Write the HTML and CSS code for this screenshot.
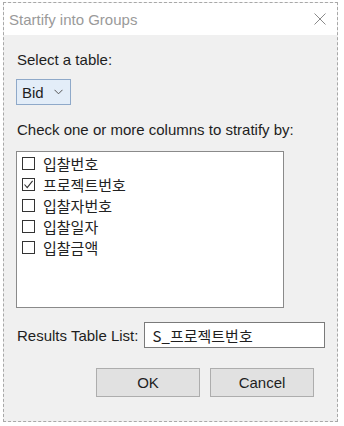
FILE: index.html
```html
<!DOCTYPE html>
<html lang="ko">
<head>
    <meta charset="UTF-8">
    <meta name="viewport" content="width=device-width, initial-scale=1.0">
    <title>Startify into Groups</title>
    <link rel="stylesheet" href="styles.css">
</head>
<body>
    <div class="window">
        <div class="titlebar">
            <span class="title">Startify into Groups</span>
            <svg class="close" width="12" height="12" viewBox="0 0 12 12">
                <path d="M0.5 0.5 L11.5 11.5 M11.5 0.5 L0.5 11.5" stroke="#8a8a8a" stroke-width="1" fill="none"/>
            </svg>
        </div>
        <div class="content">
            <div class="label">Select a table:</div>
            <div class="combo">
                <span>Bid</span>
                <svg width="9" height="6" viewBox="0 0 9 6">
                    <path d="M0.5 0.8 L4.5 4.8 L8.5 0.8" stroke="#555" stroke-width="1" fill="none"/>
                </svg>
            </div>

            <div class="label label-check">Check one or more columns to stratify by:</div>
            <div class="listbox">
                <div class="item"><span class="box"></span>입찰번호</div>
                <div class="item"><span class="box checked">
                    <svg width="11" height="11" viewBox="0 0 11 11">
                        <path d="M1.5 5.5 L4.2 8.6 L9.6 1.8" stroke="#333" stroke-width="1.1" fill="none"/>
                    </svg>
                </span>프로젝트번호</div>
                <div class="item"><span class="box"></span>입찰자번호</div>
                <div class="item"><span class="box"></span>입찰일자</div>
                <div class="item"><span class="box"></span>입찰금액</div>
            </div>

            <div class="results">
                <span class="results-label">Results Table List:</span>
                <div class="textbox">S_프로젝트번호</div>
            </div>

            <div class="buttons">
                <button type="button">OK</button>
                <button type="button">Cancel</button>
            </div>
        </div>
    </div>
</body>
</html>
```

FILE: styles.css
```css
body {
    margin: 0;
    background-color: #ffffff;
    font-family: "Segoe UI", "Liberation Sans", "Noto Sans CJK KR", sans-serif;
    font-size: 15px;
    color: #1e1e1e;
}

.window {
    margin: 2px 0 0 3px;
    width: 333px;
    height: 418px;
    border: 1px dashed #a8a8a8;
    background-color: #f0f0f0;
    display: flex;
    flex-direction: column;
}

.titlebar {
    height: 32px;
    background-color: #ffffff;
    display: flex;
    align-items: center;
    justify-content: space-between;
    padding: 0 11px 0 5px;
}

.title {
    color: #9a9a9a;
}

.content {
    padding: 15px 12px 0 12px;
}

.label {
    line-height: 20px;
    padding-left: 1px;
}

.combo {
    margin-top: 9px;
    width: 55px;
    height: 26px;
    border: 1px solid #8fa9c9;
    background-color: #e3edf8;
    display: flex;
    align-items: center;
    justify-content: space-between;
    padding: 0 7px 0 5px;
    box-sizing: border-box;
}

.label-check {
    margin-top: 15px;
}

.listbox {
    margin-top: 11px;
    width: 268px;
    height: 157px;
    border: 1px solid #8a8a8a;
    background-color: #ffffff;
    box-sizing: border-box;
    padding-top: 1px;
}

.item {
    height: 21px;
    display: flex;
    align-items: center;
    padding-left: 5px;
    font-family: "Noto Sans CJK KR", sans-serif;
    color: #222;
}

.box {
    width: 13px;
    height: 13px;
    border: 1px solid #333333;
    box-sizing: border-box;
    background-color: #ffffff;
    margin-right: 8px;
    display: flex;
    align-items: center;
    justify-content: center;
}

.results {
    margin-top: 14px;
    display: flex;
    align-items: center;
}

.results-label {
    width: 127px;
    padding-left: 1px;
}

.textbox {
    width: 182px;
    height: 26px;
    box-sizing: border-box;
    border: 1px solid #7a7a7a;
    background-color: #ffffff;
    padding-left: 8px;
    display: flex;
    align-items: center;
    font-family: "Noto Sans CJK KR", sans-serif;
}

.buttons {
    margin-top: 20px;
    display: flex;
    justify-content: flex-end;
    gap: 10px;
    padding-right: 11px;
}

button {
    width: 104px;
    height: 29px;
    background-color: #e1e1e1;
    border: 1px solid #adadad;
    font-family: inherit;
    font-size: 15px;
    color: #1e1e1e;
    padding: 0;
}
```
